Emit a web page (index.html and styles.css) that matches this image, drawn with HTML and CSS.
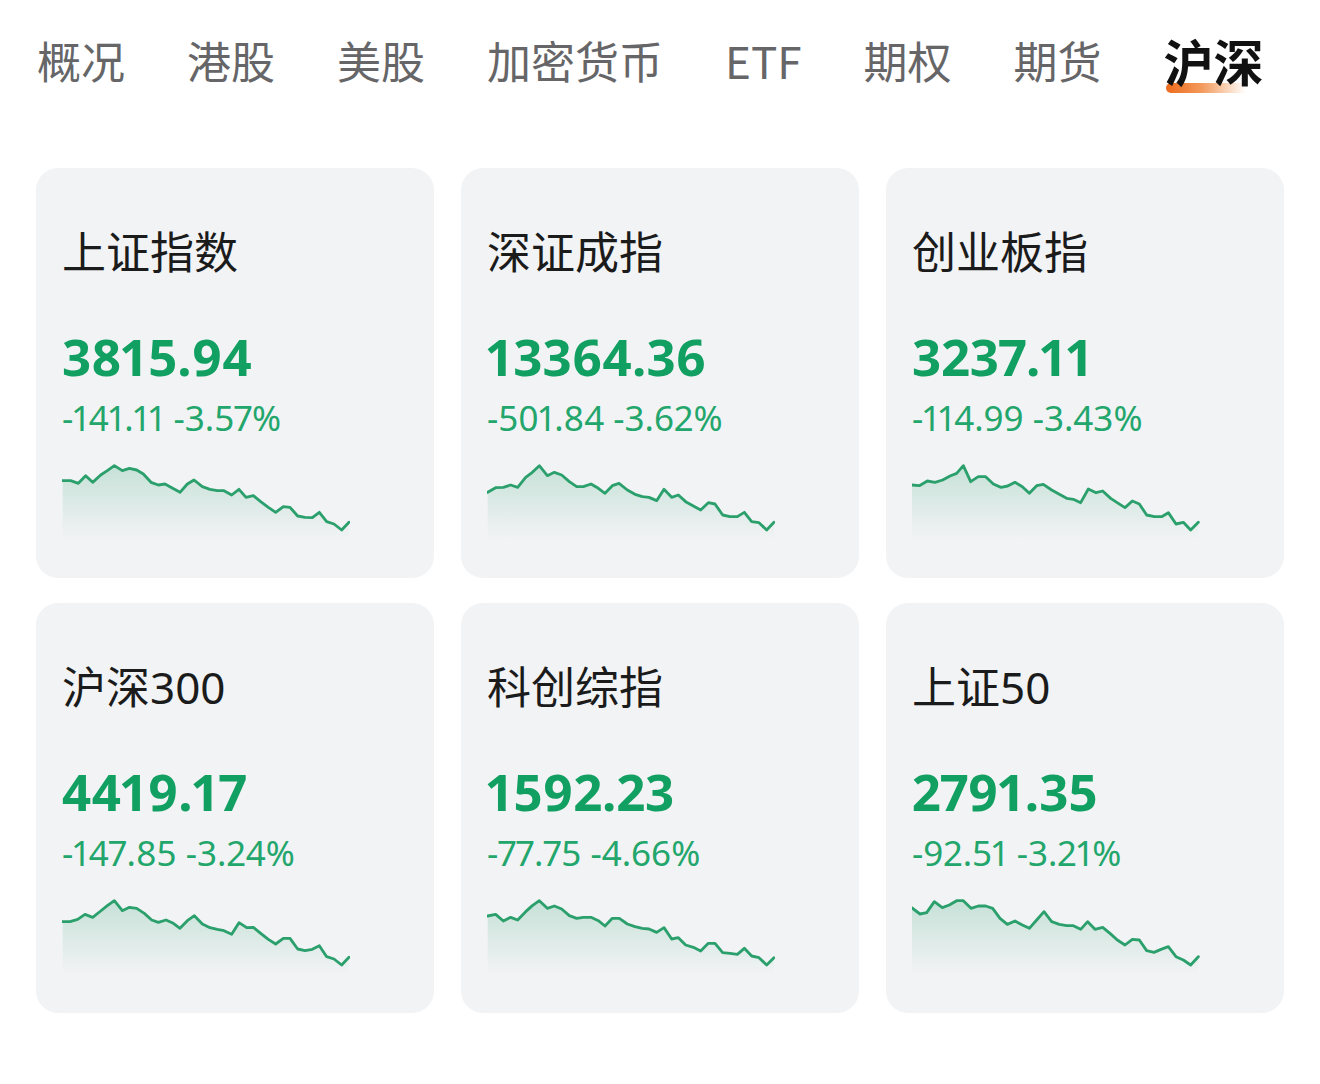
FILE: index.html
```html
<!DOCTYPE html>
<html lang="zh-CN">
<head>
<meta charset="utf-8">
<title>沪深</title>
<link rel="stylesheet" href="styles.css">
</head>
<body>
<nav class="tabs">
  <span class="tab">概况</span>
  <span class="tab">港股</span>
  <span class="tab">美股</span>
  <span class="tab">加密货币</span>
  <span class="tab">ETF</span>
  <span class="tab">期权</span>
  <span class="tab">期货</span>
  <span class="tab active"><i class="mark"></i><b>沪深</b></span>
</nav>

<main class="grid">
  <section class="card">
    <div class="name">上证指数</div>
    <div class="price">3815.94</div>
    <div class="change">-141.11 -3.57%</div>
    <svg class="spark" viewBox="36 30 864 240" width="288" height="80">
      <defs><linearGradient id="g1" x1="0" y1="0" x2="0" y2="1"><stop offset="0" stop-color="#2aa36e" stop-opacity="0.22"/><stop offset="1" stop-color="#2aa36e" stop-opacity="0"/></linearGradient></defs>
      <polygon fill="url(#g1)" points="38,92 62,92 85,100 107,77 128,97 152,75 172,62 193,47 217,62 238,55 260,60 280,72 303,97 325,105 345,102 368,115 390,127 412,102 432,90 457,110 480,118 502,122 522,122 545,135 567,118 588,142 610,137 632,155 655,172 677,187 700,170 720,172 743,198 765,202 787,203 808,187 830,215 852,222 875,240 897,217 897,270 38,270"/>
      <polyline class="line" points="38,92 62,92 85,100 107,77 128,97 152,75 172,62 193,47 217,62 238,55 260,60 280,72 303,97 325,105 345,102 368,115 390,127 412,102 432,90 457,110 480,118 502,122 522,122 545,135 567,118 588,142 610,137 632,155 655,172 677,187 700,170 720,172 743,198 765,202 787,203 808,187 830,215 852,222 875,240 897,217"/>
    </svg>
  </section>

  <section class="card">
    <div class="name">深证成指</div>
    <div class="price">13364.36</div>
    <div class="change">-501.84 -3.62%</div>
    <svg class="spark" viewBox="36 30 864 240" width="288" height="80">
      <defs><linearGradient id="g2" x1="0" y1="0" x2="0" y2="1"><stop offset="0" stop-color="#2aa36e" stop-opacity="0.22"/><stop offset="1" stop-color="#2aa36e" stop-opacity="0"/></linearGradient></defs>
      <polygon fill="url(#g2)" points="38,127 62,113 85,112 107,105 128,112 152,82 172,67 193,47 217,77 238,67 260,75 283,95 305,110 325,110 348,102 370,115 390,130 412,107 432,100 457,120 480,133 502,140 522,142 545,152 567,118 590,142 610,135 632,155 655,168 677,180 700,158 720,162 743,195 765,200 787,200 808,187 830,215 852,218 875,240 897,217 897,270 38,270"/>
      <polyline class="line" points="38,127 62,113 85,112 107,105 128,112 152,82 172,67 193,47 217,77 238,67 260,75 283,95 305,110 325,110 348,102 370,115 390,130 412,107 432,100 457,120 480,133 502,140 522,142 545,152 567,118 590,142 610,135 632,155 655,168 677,180 700,158 720,162 743,195 765,200 787,200 808,187 830,215 852,218 875,240 897,217"/>
    </svg>
  </section>

  <section class="card">
    <div class="name">创业板指</div>
    <div class="price">3237.11</div>
    <div class="change">-114.99 -3.43%</div>
    <svg class="spark" viewBox="36 30 864 240" width="288" height="80">
      <defs><linearGradient id="g3" x1="0" y1="0" x2="0" y2="1"><stop offset="0" stop-color="#2aa36e" stop-opacity="0.22"/><stop offset="1" stop-color="#2aa36e" stop-opacity="0"/></linearGradient></defs>
      <polygon fill="url(#g3)" points="35,105 58,107 82,93 105,97 128,90 150,78 170,70 190,47 212,95 235,80 257,80 280,102 303,112 323,108 345,97 367,110 388,130 410,107 430,103 455,120 478,133 500,145 520,148 542,158 565,117 588,128 608,123 632,145 655,160 675,173 697,153 718,162 740,195 763,200 785,200 805,188 828,222 850,217 872,240 895,217 895,270 35,270"/>
      <polyline class="line" points="35,105 58,107 82,93 105,97 128,90 150,78 170,70 190,47 212,95 235,80 257,80 280,102 303,112 323,108 345,97 367,110 388,130 410,107 430,103 455,120 478,133 500,145 520,148 542,158 565,117 588,128 608,123 632,145 655,160 675,173 697,153 718,162 740,195 763,200 785,200 805,188 828,222 850,217 872,240 895,217"/>
    </svg>
  </section>

  <section class="card">
    <div class="name">沪深300</div>
    <div class="price">4419.17</div>
    <div class="change">-147.85 -3.24%</div>
    <svg class="spark" viewBox="36 30 864 240" width="288" height="80">
      <defs><linearGradient id="g4" x1="0" y1="0" x2="0" y2="1"><stop offset="0" stop-color="#2aa36e" stop-opacity="0.22"/><stop offset="1" stop-color="#2aa36e" stop-opacity="0"/></linearGradient></defs>
      <polygon fill="url(#g4)" points="38,110 60,110 83,103 105,88 128,97 152,78 172,62 193,47 217,77 238,67 260,70 283,85 305,105 325,112 348,105 370,115 390,130 412,107 433,92 457,117 480,128 502,133 522,137 545,148 567,113 590,128 610,127 632,145 655,163 677,177 700,160 720,160 743,192 765,197 787,193 808,182 830,215 852,222 875,240 897,217 897,270 38,270"/>
      <polyline class="line" points="38,110 60,110 83,103 105,88 128,97 152,78 172,62 193,47 217,77 238,67 260,70 283,85 305,105 325,112 348,105 370,115 390,130 412,107 433,92 457,117 480,128 502,133 522,137 545,148 567,113 590,128 610,127 632,145 655,163 677,177 700,160 720,160 743,192 765,197 787,193 808,182 830,215 852,222 875,240 897,217"/>
    </svg>
  </section>

  <section class="card">
    <div class="name">科创综指</div>
    <div class="price">1592.23</div>
    <div class="change">-77.75 -4.66%</div>
    <svg class="spark" viewBox="36 30 864 240" width="288" height="80">
      <defs><linearGradient id="g5" x1="0" y1="0" x2="0" y2="1"><stop offset="0" stop-color="#2aa36e" stop-opacity="0.22"/><stop offset="1" stop-color="#2aa36e" stop-opacity="0"/></linearGradient></defs>
      <polygon fill="url(#g5)" points="38,93 62,88 85,108 107,97 128,105 152,80 172,62 193,47 217,70 238,63 260,72 283,92 305,100 325,97 348,97 370,107 390,123 412,100 433,100 457,117 480,125 502,130 522,132 545,142 567,128 590,162 610,158 632,180 655,187 677,198 700,175 720,175 743,203 765,205 787,208 808,190 830,213 852,218 875,240 897,218 897,270 38,270"/>
      <polyline class="line" points="38,93 62,88 85,108 107,97 128,105 152,80 172,62 193,47 217,70 238,63 260,72 283,92 305,100 325,97 348,97 370,107 390,123 412,100 433,100 457,117 480,125 502,130 522,132 545,142 567,128 590,162 610,158 632,180 655,187 677,198 700,175 720,175 743,203 765,205 787,208 808,190 830,213 852,218 875,240 897,218"/>
    </svg>
  </section>

  <section class="card">
    <div class="name">上证50</div>
    <div class="price">2791.35</div>
    <div class="change">-92.51 -3.21%</div>
    <svg class="spark" viewBox="36 30 864 240" width="288" height="80">
      <defs><linearGradient id="g6" x1="0" y1="0" x2="0" y2="1"><stop offset="0" stop-color="#2aa36e" stop-opacity="0.22"/><stop offset="1" stop-color="#2aa36e" stop-opacity="0"/></linearGradient></defs>
      <polygon fill="url(#g6)" points="35,68 60,87 80,83 103,50 127,68 148,60 170,47 190,47 213,70 235,63 257,63 278,70 300,100 322,118 345,108 367,120 388,130 410,105 432,80 455,110 478,118 500,122 520,122 542,133 563,110 585,133 608,127 630,145 652,165 675,180 697,163 718,165 740,197 762,202 783,193 805,185 828,215 850,225 872,240 895,215 895,270 35,270"/>
      <polyline class="line" points="35,68 60,87 80,83 103,50 127,68 148,60 170,47 190,47 213,70 235,63 257,63 278,70 300,100 322,118 345,108 367,120 388,130 410,105 432,80 455,110 478,118 500,122 520,122 542,133 563,110 585,133 608,127 630,145 652,165 675,180 697,163 718,165 740,197 762,202 783,193 805,185 828,215 850,225 872,240 895,215"/>
    </svg>
  </section>
</main>
</body>
</html>
```

FILE: styles.css
```css
html, body {
  margin: 0;
  padding: 0;
  background: #ffffff;
}

body {
  font-family: "Noto Sans CJK SC", "Noto Sans", sans-serif;
  color: #1a1a1a;
}

.tabs {
  display: flex;
  align-items: center;
  gap: 62px;
  height: 60px;
  padding: 30px 0 0 37px;
}

.tab {
  font-size: 44px;
  line-height: 60px;
  color: #666668;
  white-space: nowrap;
}

.tab.active {
  position: relative;
  font-size: 50px;
  color: #111111;
}

.tab.active b {
  position: relative;
  font-weight: 700;
}

.mark {
  position: absolute;
  left: 2px;
  top: 53px;
  width: 80px;
  height: 10px;
  border-radius: 5px 0 0 5px;
  background: linear-gradient(90deg, #ee6a1c 0%, #f39a5c 45%, rgba(248, 200, 170, 0) 100%);
}

.grid {
  display: grid;
  grid-template-columns: repeat(3, 398px);
  column-gap: 27px;
  row-gap: 25px;
  margin: 78px 0 0 36px;
}

.card {
  background: #f2f3f5;
  border-radius: 22px;
  padding: 60px 26px 38px 26px;
  display: flex;
  flex-direction: column;
  align-items: flex-start;
}

.name {
  font-family: "Noto Sans", "Noto Sans CJK SC", sans-serif;
  font-size: 44px;
  line-height: 48px;
  color: #1b1b1b;
}

.price {
  margin-top: 55px;
  font-family: "Noto Sans", sans-serif;
  font-variant-numeric: proportional-nums;
  font-weight: 700;
  font-size: 51px;
  line-height: 50px;
  color: #12a062;
}

.change {
  margin-top: 20px;
  font-family: "Noto Sans", sans-serif;
  font-variant-numeric: proportional-nums;
  font-size: 35px;
  line-height: 34px;
  color: #22a66c;
}

.spark {
  display: block;
  margin-top: 25px;
}

.spark .line {
  fill: none;
  stroke: #2ba06c;
  stroke-width: 8.5;
  stroke-linejoin: round;
  stroke-linecap: round;
}
```
